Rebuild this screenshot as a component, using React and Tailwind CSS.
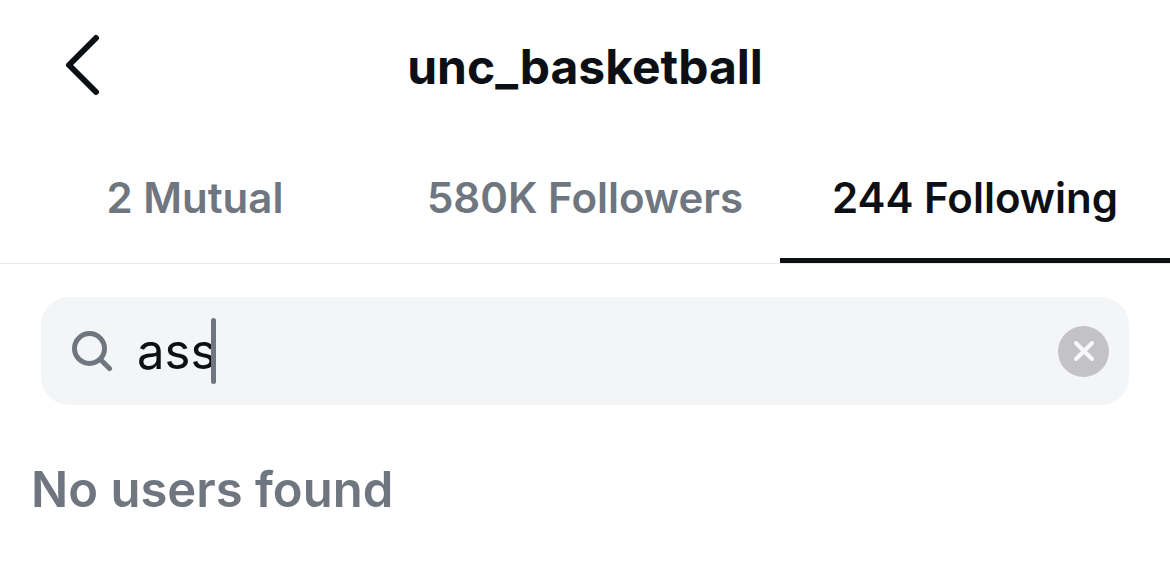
export default function App() {
  return (
    <main className="bg-white font-['Inter',sans-serif] text-[#0c1014]">
      <header className="grid h-[132px] grid-cols-[1fr_auto_1fr] items-center px-16">
        <button type="button" aria-label="Back" className="w-10">
          <svg width="36" height="64" viewBox="0 0 36 64" fill="none" stroke="currentColor" strokeWidth="6" strokeLinecap="round" strokeLinejoin="round" aria-hidden="true">
            <path d="M32 4 5 31 32 58" />
          </svg>
        </button>
        <h1 className="pt-[2px] text-[48px] leading-[60px] font-bold">unc_basketball</h1>
      </header>
      <nav aria-label="Connections" className="grid h-[132px] grid-cols-3 border-b border-[#e6e8ea] text-center text-[42px] font-semibold">
        <a href="#mutual" className="flex items-center justify-center text-[#6f7680]">2 Mutual</a>
        <a href="#followers" className="flex items-center justify-center text-[#6f7680]">580K Followers</a>
        <a href="#following" aria-current="page" className="flex items-center justify-center shadow-[inset_0_-5px_0_#0c1014]">244 Following</a>
      </nav>
      <section className="px-[41px] pt-[33px]">
        <label className="flex h-[108px] items-center rounded-[28px] bg-[#f3f5f7] pr-5 pl-[30px]">
          <svg width="42" height="42" viewBox="0 0 42 42" fill="none" stroke="#6f7680" strokeWidth="5" strokeLinecap="round" aria-hidden="true">
            <circle cx="18.5" cy="18.5" r="15" />
            <path d="m29.5 29.5 9 9" />
          </svg>
          <span className="relative ml-6 flex min-w-0 flex-1 items-center">
            <input type="text" aria-label="Search" defaultValue="ass" className="w-full min-w-0 bg-transparent pt-[2px] text-[49px] leading-[64px] outline-none" />
            <span className="absolute left-[74px] h-[66px] w-[5px] rounded-full bg-[#6f7680]" />
          </span>
          <button type="button" aria-label="Clear search" className="flex size-[51px] items-center justify-center rounded-full bg-[#c3c3c5]">
            <svg width="24" height="24" viewBox="0 0 24 24" fill="none" stroke="#f7f8f9" strokeWidth="4" strokeLinecap="round" aria-hidden="true">
              <path d="m4 4 16 16M20 4 4 20" />
            </svg>
          </button>
        </label>
      </section>
      <p className="px-[31px] pt-[53px] text-[49px] leading-[64px] font-semibold text-[#6f7680]">No users found</p>
    </main>
  );
}
